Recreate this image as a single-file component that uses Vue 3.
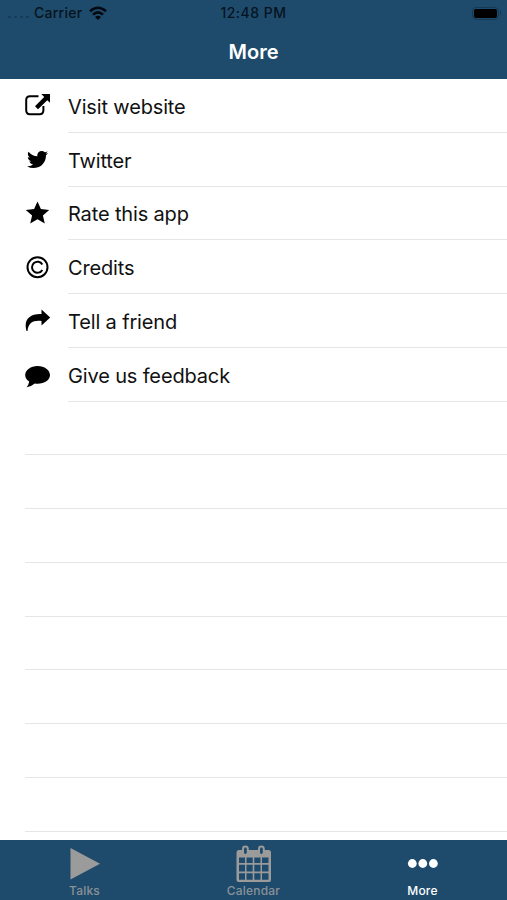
<template>
  <div class="screen">
    <header class="header">
      <div class="status">
        <div class="carrier">
          <span class="signal"><i v-for="n in 4" :key="n"></i></span>
          <span class="carrier-name">Carrier</span>
          <svg class="wifi" width="20" height="15" viewBox="0 0 20 15">
            <path d="M2 5.2Q10-1.6 18 5.2" />
            <path d="M5 8.6Q10 4.2 15 8.6" />
            <path class="dot" d="M10 14 7 11.1Q10 8.6 13 11.1Z" />
          </svg>
        </div>
        <span class="time">12:48 PM</span>
        <div class="battery-side">
          <span class="battery"><span class="charge"></span></span>
          <span class="cap"></span>
        </div>
      </div>
      <h1>More</h1>
    </header>

    <ul class="list">
      <li v-for="item in items" :key="item.icon" class="row">
        <svg class="icon" width="28" height="26" viewBox="0 0 28 26">
          <g v-if="item.icon === 'link'">
            <path class="line" d="M14.500 3.200H6Q2.200 3.200 2.200 7V17.200Q2.200 21.200 6 21.200H15.500Q19.400 21.200 19.400 17.200V13" />
            <path d="M17.300 1H26V9.800L23.300 7.300 14 16.200 11 13.300 20.200 4Z" />
          </g>
          <path v-else-if="item.icon === 'twitter'" transform="translate(2.400 .5) scale(.0134)" d="M1620 408q-67 98-162 167 1 14 1 42 0 130-38 259.500t-115.500 248.500-184.500 210.500-258 146-323 54.500q-271 0-496-145 35 4 78 4 225 0 401-138-105-2-188-64.500t-114-159.500q33 5 61 5 43 0 85-11-112-23-185.500-111.500t-73.500-205.500v-4q68 38 146 41-66-44-105-115t-39-154q0-88 44-163 121 149 294.500 238.500t371.500 99.500q-8-38-8-74 0-134 94.500-228.500t228.500-94.500q140 0 236 102 109-21 205-78-37 115-142 178 93-10 186-50z" />
          <path v-else-if="item.icon === 'star'" d="M13.500 1.500 16.900 9.100 25.200 9.900 18.900 15.400 20.800 23.500 13.500 19.300 6.200 23.500 8.100 15.400 1.800 9.900 10.100 9.100Z" />
          <g v-else-if="item.icon === 'copyright'" class="line">
            <circle cx="13.500" cy="13.200" r="10" />
            <path d="M18.300 10.500A5.500 5.500 0 1 0 18.300 15.900" />
          </g>
          <path v-else-if="item.icon === 'share'" d="M17.500 1.500 26.200 9.500 17.500 17.500V13C9 12.200 4.500 14.500 3.500 23H2.500C-.5 12.500 4.500 5.500 17.500 5.900Z" />
          <path v-else d="M13.600 4C20.500 4 26 8 26 13S20.500 21.700 13.600 21.700Q12.200 21.700 10.800 21.500 7.200 24.700 2.500 25.200 4.800 22.800 5.200 19.600C2.700 18 1.200 15.700 1.200 13 1.200 8 6.700 4 13.600 4Z" />
        </svg>
        <span class="label">{{ item.label }}</span>
      </li>
      <li v-for="n in 8" :key="n" class="row empty"></li>
    </ul>

    <nav class="tabs">
      <div class="tab">
        <svg width="36" height="38" viewBox="0 0 36 38">
          <path d="M3.500 4 33 19.800 3.500 35.500Z" />
        </svg>
        <span>Talks</span>
      </div>
      <div class="tab">
        <svg width="36" height="38" viewBox="1 0 36 38">
          <path fill-rule="evenodd" d="M3.500 6H33.500Q36 6 36 8.500V36Q36 38 34 38H3.500Q1.500 38 1.500 36V8.500Q1.500 6 3.500 6ZM4 13.500V19H10V13.500ZM11.500 13.500V19H17.700V13.500ZM19.300 13.500V19H25.500V13.500ZM27 13.500V19H33.500V13.500ZM4 20.700V27.500H10V20.700ZM11.500 20.700V27.500H17.700V20.700ZM19.300 20.700V27.500H25.500V20.700ZM27 20.700V27.500H33.500V20.700ZM4 29.200V35.700H10V29.200ZM11.500 29.200V35.700H17.700V29.200ZM19.300 29.200V35.700H25.500V29.200ZM27 29.200V35.700H33.500V29.200Z" />
          <rect class="ring" x="8" y="2.500" width="4.800" height="8.500" rx="2.400" />
          <rect class="ring" x="24" y="2.500" width="4.800" height="8.500" rx="2.400" />
        </svg>
        <span>Calendar</span>
      </div>
      <div class="tab active">
        <svg width="36" height="38" viewBox="0 0 36 38">
          <circle cx="7.300" cy="19.500" r="4.400" />
          <circle cx="17.800" cy="19.500" r="4.400" />
          <circle cx="28.400" cy="19.500" r="4.400" />
        </svg>
        <span>More</span>
      </div>
    </nav>
  </div>
</template>

<script setup>
const items = [
  { icon: 'link', label: 'Visit website' },
  { icon: 'twitter', label: 'Twitter' },
  { icon: 'star', label: 'Rate this app' },
  { icon: 'copyright', label: 'Credits' },
  { icon: 'share', label: 'Tell a friend' },
  { icon: 'comment', label: 'Give us feedback' },
]
</script>

<style>
body {
  margin: 0;
}
</style>

<style scoped>
.screen {
  display: flex;
  flex-direction: column;
  height: 900px;
  overflow: hidden;
  background: #fff;
  color: #111;
  font-family: Inter, "Liberation Sans", sans-serif;
}

.header {
  flex: none;
  height: 79px;
  background: #1e4b6c;
}

.status {
  display: grid;
  grid-template-columns: 1fr auto 1fr;
  align-items: center;
  height: 26px;
  color: #06131e;
  font-size: 14px;
  font-weight: 500;
}

.carrier {
  display: flex;
  align-items: center;
  padding-left: 8px;
}

.signal {
  display: flex;
  gap: 3px;
  width: 26px;
  padding-top: 8px;
}

.signal i {
  width: 3px;
  height: 2px;
  background: #173c59;
}

.carrier-name {
  width: 54px;
  padding-bottom: 2px;
  letter-spacing: 0.25px;
}

.time {
  padding-bottom: 1px;
  letter-spacing: 0.5px;
}

.wifi {
  fill: none;
  stroke: #03090f;
  stroke-width: 2.5;
}

.wifi .dot {
  fill: #03090f;
  stroke: none;
}

.battery-side {
  display: flex;
  align-items: center;
  justify-content: flex-end;
  gap: 1px;
  padding-right: 6px;
}

.battery {
  box-sizing: border-box;
  width: 27px;
  height: 13px;
  padding: 1px;
  border: 1px solid #163a55;
  border-radius: 4px;
}

.charge {
  display: block;
  height: 9px;
  border-radius: 2px;
  background: #000;
}

.cap {
  width: 1px;
  height: 4px;
  background: #163a55;
}

h1 {
  margin: 0;
  color: #fff;
  font-size: 20px;
  font-weight: 600;
  line-height: 53px;
  text-align: center;
}

.list {
  flex: 1;
  min-height: 0;
  margin: 0;
  padding: 0;
  list-style: none;
}

.row {
  display: flex;
  align-items: center;
  box-sizing: border-box;
  height: 53.75px;
  padding-left: 24px;
}

.icon {
  flex: none;
  width: 28px;
  margin-right: 16px;
  fill: #000;
}

.line {
  fill: none;
  stroke: #000;
  stroke-width: 2;
}

.label {
  display: flex;
  flex: 1;
  align-items: center;
  box-sizing: border-box;
  height: 100%;
  padding-top: 3px;
  border-bottom: 1px solid #e6e6e7;
  font-size: 20px;
  letter-spacing: -0.15px;
}

.empty {
  margin-left: 25px;
  padding: 0;
  border-bottom: 1px solid #e6e6e7;
}

.tabs {
  display: grid;
  flex: none;
  grid-template-columns: repeat(3, 1fr);
  height: 60px;
  background: #1e4b6c;
}

.tab {
  display: flex;
  flex-direction: column;
  align-items: center;
  padding-top: 4px;
  color: #8a9298;
  font-size: 12px;
  font-weight: 500;
  letter-spacing: 0.2px;
  line-height: 18px;
}

.tab svg {
  flex: none;
  fill: #9b9b9b;
}

.tab .ring {
  fill: #1e4b6c;
  stroke: #9b9b9b;
  stroke-width: 2;
}

.active {
  color: #fff;
}

.active svg {
  fill: #fff;
}
</style>
